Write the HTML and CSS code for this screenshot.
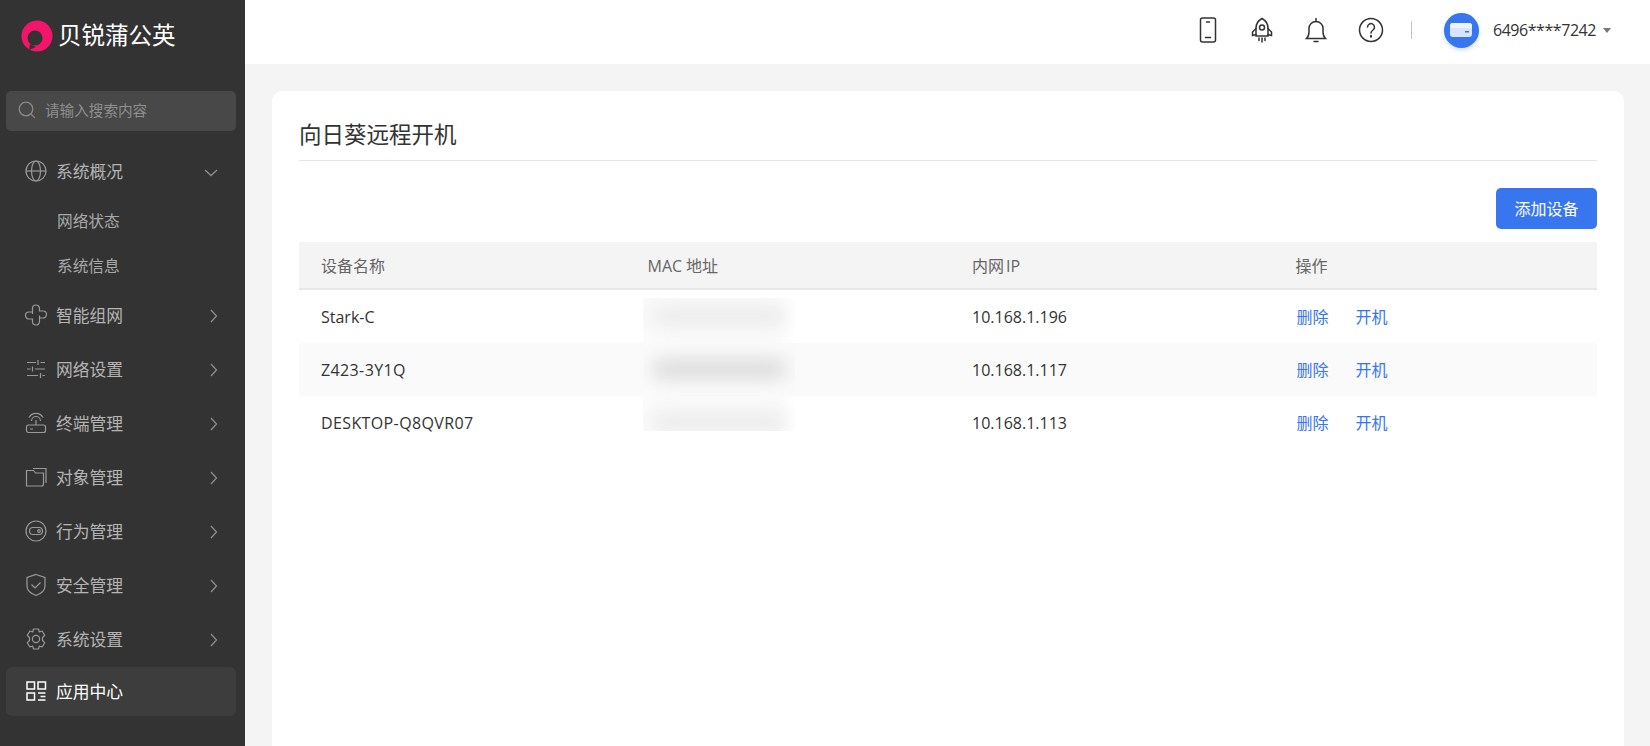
FILE: index.html
```html
<!DOCTYPE html>
<html lang="zh-CN">
<head>
<meta charset="utf-8">
<title>向日葵远程开机</title>
<link rel="stylesheet" href="styles.css">
</head>
<body>
<div class="app">
  <aside class="sidebar">
    <div class="logo">
      <svg class="logo-mark" width="32" height="32" viewBox="0 0 32 32"><circle cx="16" cy="16" r="15.500" fill="#f2156c"/><circle cx="14" cy="18" r="7.500" fill="#333"/><path d="M9 24l-1 6 7-3z" fill="#333"/></svg>
      <span class="logo-text">贝锐蒲公英</span>
    </div>
    <div class="search">
      <svg class="ic-search" width="18" height="18" viewBox="0 0 18 18" fill="none" stroke="#8a8a8a" stroke-width="1.300"><circle cx="8" cy="8" r="6.800"/><path d="M13 13l3.600 3.600" stroke-linecap="round"/></svg>
      <span class="search-ph">请输入搜索内容</span>
    </div>
    <nav class="menu">
      <div class="item">
        <svg class="ic" viewBox="0 0 24 24"><circle cx="12" cy="12" r="10"/><ellipse cx="12" cy="12" rx="4.500" ry="10"/><path d="M2 12h20"/></svg>
        <span class="label">系统概况</span>
        <svg class="arrow-down" width="14" height="8" viewBox="0 0 14 8"><path d="M1 1l6 5.500L13 1"/></svg>
      </div>
      <div class="sub">网络状态</div>
      <div class="sub">系统信息</div>
      <div class="item">
        <svg class="ic" viewBox="0 0 24 24"><path d="M8.500 11V5.500a3.500 3.500 0 0 1 7 0V8H19a3.500 3.500 0 0 1 0 7h-3.500"/><path d="M15.500 12.500v6a3.500 3.500 0 0 1-7 0V16H5a3.500 3.500 0 0 1 0-7h3.500"/></svg>
        <span class="label">智能组网</span>
        <svg class="arrow" width="8" height="14" viewBox="0 0 8 14"><path d="M1 1l5.500 6L1 13"/></svg>
      </div>
      <div class="item">
        <svg class="ic" viewBox="0 0 24 24"><path d="M3 5.500h9M16.500 5.500H21M3 12h3.500M11 12h10M3 18.500h11M18.500 18.500H21M14 3v5M8.500 9.500v5M16.500 16v5"/></svg>
        <span class="label">网络设置</span>
        <svg class="arrow" width="8" height="14" viewBox="0 0 8 14"><path d="M1 1l5.500 6L1 13"/></svg>
      </div>
      <div class="item">
        <svg class="ic" viewBox="0 0 24 24"><rect x="2.500" y="14" width="19" height="7.500" rx="2"/><path d="M6 18h3M12 14V9M7.500 10a4.500 4.500 0 0 1 9 0M5 6.500a8 8 0 0 1 14 0"/></svg>
        <span class="label">终端管理</span>
        <svg class="arrow" width="8" height="14" viewBox="0 0 8 14"><path d="M1 1l5.500 6L1 13"/></svg>
      </div>
      <div class="item">
        <svg class="ic" viewBox="0 0 24 24"><path d="M2.500 21V5.500h7l2 2.500h8v11a2 2 0 0 1-2 2z"/><path d="M9 3.500h13v14.500"/></svg>
        <span class="label">对象管理</span>
        <svg class="arrow" width="8" height="14" viewBox="0 0 8 14"><path d="M1 1l5.500 6L1 13"/></svg>
      </div>
      <div class="item">
        <svg class="ic" viewBox="0 0 24 24"><circle cx="12" cy="12" r="10"/><rect x="5.500" y="8.500" width="13" height="7" rx="3.500"/><circle cx="15" cy="12" r="1.300"/></svg>
        <span class="label">行为管理</span>
        <svg class="arrow" width="8" height="14" viewBox="0 0 8 14"><path d="M1 1l5.500 6L1 13"/></svg>
      </div>
      <div class="item">
        <svg class="ic" viewBox="0 0 24 24"><path d="M12 1.500l9 3v8.500c0 4.500-3.700 7.500-9 9.500-5.300-2-9-5-9-9.500V4.500z"/><path d="M7.500 11.500l3.500 3.500 5.500-5.500"/></svg>
        <span class="label">安全管理</span>
        <svg class="arrow" width="8" height="14" viewBox="0 0 8 14"><path d="M1 1l5.500 6L1 13"/></svg>
      </div>
      <div class="item">
        <svg class="ic" viewBox="0 0 24 24"><path d="M9.500 2h5l.8 3 2.800-1 2.600 4.300-2.200 2.200v3l2.200 2.200-2.600 4.300-2.800-1-.8 3h-5l-.8-3-2.800 1-2.600-4.300 2.200-2.200v-3L3.300 8.300 5.900 4l2.800 1z" stroke-linejoin="round"/><circle cx="12" cy="12" r="3.600"/></svg>
        <span class="label">系统设置</span>
        <svg class="arrow" width="8" height="14" viewBox="0 0 8 14"><path d="M1 1l5.500 6L1 13"/></svg>
      </div>
      <div class="item active">
        <svg class="ic" viewBox="0 0 24 24"><rect x="3" y="3" width="7.500" height="7"/><rect x="14" y="3" width="7.500" height="7"/><rect x="3" y="14" width="7.500" height="7"/><path d="M14 14h7.500M16.500 17.500h5M14 21h7.500"/></svg>
        <span class="label">应用中心</span>
      </div>
    </nav>
  </aside>
  <div class="main">
    <header class="topbar">
      <svg class="tb-ic" width="24" height="26" viewBox="0 0 24 26"><rect x="4.500" y="1" width="15" height="24" rx="2"/><path d="M10.500 5h3M9.500 20.500h5"/></svg>
      <svg class="tb-ic" width="24" height="26" viewBox="0 0 24 26"><path d="M12 1.500c4 2.300 6 5.500 6 9.500v8H6v-8c0-4 2-7.200 6-9.500z"/><circle cx="12" cy="10.500" r="2.500"/><path d="M6 11.500l-3.500 3.500v3.500L6 17.500M18 11.500l3.500 3.500v3.500L18 17.500M9 21v2.500M12 21v4M15 21v2.500"/></svg>
      <svg class="tb-ic" width="24" height="26" viewBox="0 0 24 26"><path d="M2.500 21.500h19c-2-1.800-2.500-3.200-2.500-6.500v-3.500a7 7 0 0 0-14 0V15c0 3.300-.5 4.700-2.500 6.500z"/><path d="M12 1.500v3M10 24.500h4"/></svg>
      <svg class="tb-ic last" width="26" height="26" viewBox="0 0 26 26"><circle cx="13" cy="13" r="11.500"/><path d="M9.500 10a3.500 3.500 0 1 1 5.500 3c-1.300.9-2 1.500-2 3"/><path class="dot" d="M13 18.800v1"/></svg>
      <span class="tb-sep"></span>
      <span class="avatar"><svg width="22" height="14" viewBox="0 0 22 14"><rect width="22" height="14" rx="3" fill="#d8e4fb"/><rect width="22" height="5" rx="2.500" fill="#eef3fd"/><rect x="15" y="8" width="4" height="1.500" fill="#3776ee"/></svg></span>
      <span class="user">6496****7242</span>
      <span class="caret"></span>
    </header>
    <main class="content">
      <section class="card">
        <h1 class="title">向日葵远程开机</h1>
        <div class="toolbar"><button class="btn">添加设备</button></div>
        <div class="table">
          <div class="row head"><span><b>设备名称</b></span><span><b>MAC<em class="wide"></em>地址</b></span><span><b>内网<em></em>IP</b></span><span><b>操作</b></span></div>
          <div class="row"><span>Stark-C</span><span></span><span>10.168.1.196</span><span class="ops"><a>删除</a><a>开机</a></span></div>
          <div class="row alt"><span class="caps">Z423-3Y1Q</span><span></span><span>10.168.1.117</span><span class="ops"><a>删除</a><a>开机</a></span></div>
          <div class="row"><span class="caps">DESKTOP-Q8QVR07</span><span></span><span>10.168.1.113</span><span class="ops"><a>删除</a><a>开机</a></span></div>
          <div class="mask"><i></i><i class="dark"></i><i></i></div>
        </div>
      </section>
    </main>
  </div>
</div>
</body>
</html>
```
FILE: styles.css
```css
* { box-sizing: border-box; }
html, body { margin: 0; height: 100%; overflow: hidden; }
body { font-family: "Open Sans", "Noto Sans CJK SC", sans-serif; font-size: 16px; color: #333; background: #f4f4f4; }
.app { display: flex; height: 746px; }

.sidebar { width: 245px; flex: none; background: #333; padding: 0 9px 0 6px; }
.logo { height: 72px; padding: 19px 0 0 15px; display: flex; align-items: flex-start; }
.logo-mark { flex: none; margin-top: 1px; }
.logo-text { margin-left: 5px; font-size: 23.500px; line-height: 30px; color: #fff; font-weight: 400; font-family: "Noto Sans CJK SC", sans-serif; }
.search { margin-top: 19px; height: 40px; background: #484848; border-radius: 5px; display: flex; align-items: center; padding: 0 0 2px 12px; }
.search-ph { margin-left: 9px; padding-bottom: 2px; font-size: 14.600px; color: #8f8f8f; }
.menu { margin-top: 14px; }
.item { height: 54px; display: flex; align-items: center; padding: 0 0 2px 18px; position: relative; color: #b4b4b4; font-size: 16.800px; }
.ic { width: 24px; height: 24px; flex: none; fill: none; stroke: #9a9a9a; stroke-width: 1.200; }
.label { margin-left: 8px; }
.arrow, .arrow-down { position: absolute; fill: none; stroke: #8e8e8e; stroke-width: 1.300; }
.arrow { right: 18px; top: 20px; }
.arrow-down { right: 18px; top: 24px; }
.sub { height: 45px; padding: 0 0 2px 51px; display: flex; align-items: center; font-size: 15.700px; color: #a9a9a9; }
.item.active { height: 49px; background: #3d3d3d; border-radius: 6px; color: #fff; }
.item.active .ic { stroke: #fff; stroke-width: 1.500; }

.main { flex: 1; min-width: 0; display: flex; flex-direction: column; }
.topbar { height: 64px; flex: none; background: #fff; display: flex; align-items: center; justify-content: flex-end; padding: 0 39px 4px 0; }
.tb-ic { flex: none; fill: none; stroke: #333; stroke-width: 1.500; stroke-linecap: round; margin-right: 30px; }
.tb-ic.last { margin-right: 26px; }
.tb-ic .dot { stroke-width: 2; }
.tb-sep { width: 1px; height: 18px; background: #c4c4c4; margin: 0 32px 0 1px; }
.avatar { width: 35px; height: 35px; border-radius: 50%; background: #3776ee; box-shadow: 0 2px 4px rgba(55,118,238,.25); display: flex; align-items: center; justify-content: center; }
.user { margin-left: 14px; font-size: 16px; letter-spacing: -.45px; color: #333; }
.caret { margin-left: 7px; border: 4px solid transparent; border-top: 5px solid #777; border-bottom: 0; }

.content { flex: 1; padding: 27px 26px 0 27px; min-height: 0; }
.card { height: 100%; background: #fff; border-radius: 10px 10px 0 0; padding: 0 27px; }
.title { margin: 0; height: 70px; font-weight: 400; font-size: 22.500px; color: #333; border-bottom: 1px solid #e4e4e4; line-height: 85px; font-family: "Noto Sans CJK SC", sans-serif; }
.toolbar { margin-top: 27px; display: flex; justify-content: flex-end; }
.btn { width: 101px; height: 41px; border: 0; border-radius: 5px; background: #3776ee; color: #fff; font: inherit; padding: 0 0 2px; }
.table { position: relative; margin-top: 13px; }
.row { display: grid; grid-template-columns: repeat(4, 1fr); height: 53px; align-items: center; color: #333; }
.row > span { padding-left: 24px; }
.row > span:first-child { padding-left: 22px; }
.row.head > span:last-child { padding-left: 23px; }
.caps { letter-spacing: .38px; }
.row.head { height: 48px; background: #f4f4f4; border-bottom: 2px solid #e8e8e8; color: #666; }
.row.head b { font-weight: 400; }
.row.head em { display: inline-block; width: 2px; }
.row.head em.wide { width: 4px; }
.row.alt { background: #fafafa; }
.ops { padding-bottom: 2px; }
.ops a { color: #3776ee; margin-right: 27px; }
.mask { position: absolute; left: 344px; top: 56px; width: 152px; height: 133px; overflow: hidden; display: flex; flex-direction: column; gap: 31px; padding: 7px 8px 0; background: linear-gradient(90deg, #fbfbfb 88%, rgba(251,251,251,0)); }
.mask i { display: block; flex: none; height: 22px; background: #ececec; filter: blur(9px); border-radius: 11px; }
.mask i.dark { background: #dddddd; }
```
